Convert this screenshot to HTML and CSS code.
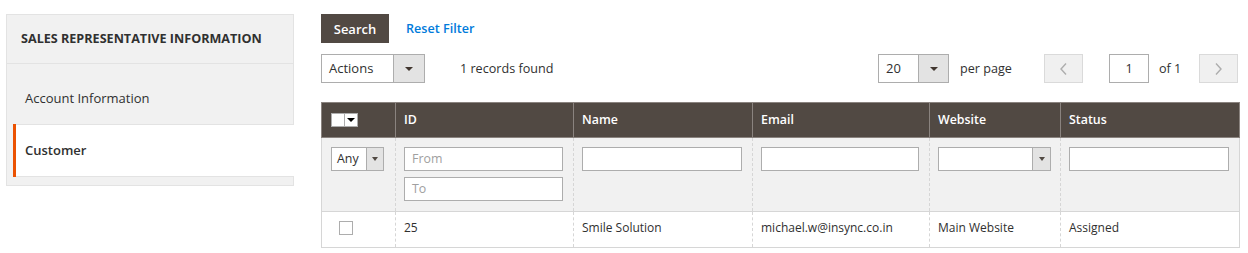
FILE: index.html
```html
<!DOCTYPE html>
<html lang="en">
<head>
<meta charset="utf-8">
<title>Sales Representative</title>
<link rel="stylesheet" href="styles.css">
</head>
<body>
<div class="page">
  <div class="nav">
    <div class="nav-title">Sales Representative Information</div>
    <ul class="nav-items">
      <li class="nav-item"><a class="nav-link" href="#">Account Information</a></li>
      <li class="nav-item active"><a class="nav-link" href="#">Customer</a></li>
    </ul>
  </div>
  <div class="main">
    <div class="toolbar-top">
      <button class="btn-search" type="button">Search</button>
      <a class="reset" href="#">Reset Filter</a>
    </div>
    <div class="toolbar">
      <div class="select sel-actions"><span class="sel-text">Actions</span><span class="sel-arrow"><i class="tri"></i></span></div>
      <span class="records">1 records found</span>
      <div class="pager">
        <div class="select sel-limit"><span class="sel-text">20</span><span class="sel-arrow"><i class="tri"></i></span></div>
        <span class="per-page">per page</span>
        <button class="pg-btn prev" type="button"><svg width="7" height="12" viewBox="0 0 7 12"><polyline points="6,0.5 1,6 6,11.5" fill="none" stroke="#adadad" stroke-width="1.4"/></svg></button>
        <div class="pg-input">1</div>
        <span class="of">of 1</span>
        <button class="pg-btn next" type="button"><svg width="7" height="12" viewBox="0 0 7 12"><polyline points="1,0.5 6,6 1,11.5" fill="none" stroke="#adadad" stroke-width="1.4"/></svg></button>
      </div>
    </div>
    <table class="grid">
      <colgroup>
        <col style="width:74px"><col style="width:178px"><col style="width:179px"><col style="width:177px"><col style="width:131px"><col style="width:179px">
      </colgroup>
      <thead>
        <tr class="head">
          <th class="th-mass"><div class="mass"><span class="mass-box"></span><span class="mass-arrow"><i class="tri tri-dark"></i></span></div></th>
          <th>ID</th>
          <th>Name</th>
          <th>Email</th>
          <th>Website</th>
          <th>Status</th>
        </tr>
        <tr class="filters">
          <td class="td-first"><div class="select sel-small sel-any"><span class="sel-text">Any</span><span class="sel-arrow"><i class="tri"></i></span></div></td>
          <td><div class="input placeholder">From</div><div class="input placeholder gap">To</div></td>
          <td><div class="input"></div></td>
          <td><div class="input"></div></td>
          <td><div class="select sel-small sel-web"><span class="sel-text"></span><span class="sel-arrow"><i class="tri"></i></span></div></td>
          <td><div class="input"></div></td>
        </tr>
      </thead>
      <tbody>
        <tr class="row">
          <td class="td-check"><span class="checkbox"></span></td>
          <td>25</td>
          <td>Smile Solution</td>
          <td>michael.w@insync.co.in</td>
          <td>Main Website</td>
          <td>Assigned</td>
        </tr>
      </tbody>
    </table>
  </div>
</div>
</body>
</html>
```
FILE: styles.css
```css
* { box-sizing: border-box; }
body {
  margin: 0;
  font-family: "Open Sans", "DejaVu Sans", sans-serif;
  color: #303030;
  background: #fff;
}
.page {
  display: flex;
  align-items: flex-start;
  padding: 14px 0 0 6px;
}

/* left nav */
.nav {
  width: 288px;
  flex: none;
  background: #f1f1f1;
  border: 1px solid #e3e3e3;
}
.nav-title {
  padding: 16px 14px;
  font-size: 12.6px;
  line-height: 16px;
  font-weight: 700;
  text-transform: uppercase;
  border-bottom: 1px solid #e3e3e3;
}
.nav-items {
  list-style: none;
  margin: 0;
  padding: 8px 0 9px;
}
.nav-item {
  margin-left: 6px;
  border-left: 3px solid transparent;
}
.nav-item.active { border-left-color: #eb5202; }
.nav-link {
  display: block;
  padding: 16px 10px 16px 9px;
  font-size: 13px;
  line-height: 19px;
  border: 1px solid transparent;
  border-width: 1px 0;
  margin-bottom: -1px;
  color: #303030;
  text-decoration: none;
}
.active .nav-link {
  background: #fff;
  border-color: #e3e3e3;
  margin-right: -1px;
  font-weight: 600;
}

/* main */
.main {
  margin-left: 27px;
  width: 918px;
  flex: none;
}
.toolbar-top {
  display: flex;
  align-items: center;
  height: 29px;
}
.btn-search {
  background: #514943;
  color: #fff;
  border: none;
  height: 29px;
  width: 68px;
  padding: 0;
  font-family: "Open Sans", sans-serif;
  font-size: 13px;
  font-weight: 600;
}
.reset {
  margin-left: 17px;
  color: #007bdb;
  font-size: 12.6px;
  font-weight: 600;
  text-decoration: none;
}
.toolbar {
  display: flex;
  align-items: center;
  margin-top: 11px;
  height: 29px;
  font-size: 12.6px;
}
.select {
  display: flex;
  height: 29px;
  border: 1px solid #adadad;
  background: #fff;
}
.sel-text {
  flex: 1;
  display: flex;
  align-items: center;
  padding-left: 7px;
  font-size: 13px;
  padding-bottom: 1px;
}
.sel-arrow {
  flex: none;
  display: flex;
  align-items: center;
  justify-content: center;
  background: #e3e3e3;
  border-left: 1px solid #adadad;
}
.tri {
  display: block;
  width: 0;
  height: 0;
  border-left: 4px solid transparent;
  border-right: 4px solid transparent;
  border-top: 4px solid #41362f;
}
.sel-actions { width: 104px; }
.sel-actions .sel-arrow { width: 31px; }
.records { margin-left: 35px; padding-bottom: 1px; }
.pager {
  margin-left: auto;
  display: flex;
  align-items: center;
  margin-right: 1px;
}
.sel-limit { width: 71px; }
.sel-limit .sel-arrow { width: 30px; }
.per-page { margin-left: 11px; width: 84px; padding-bottom: 1px; }
.pg-btn {
  width: 39px;
  height: 29px;
  background: #f0f0f0;
  border: 1px solid #dadada;
  display: flex;
  align-items: center;
  justify-content: center;
  padding: 0;
}
.pg-input {
  margin-left: 26px;
  width: 40px;
  height: 29px;
  border: 1px solid #adadad;
  display: flex;
  align-items: center;
  justify-content: center;
  padding-bottom: 1px;
}
.of { margin-left: 10px; width: 40px; padding-bottom: 1px; }

/* grid */
.grid {
  margin-top: 19px;
  width: 918px;
  border-collapse: collapse;
  table-layout: fixed;
  font-size: 12px;
}
.head th {
  background: #514943;
  color: #fff;
  font-weight: 600;
  font-size: 12.4px;
  text-align: left;
  height: 35px;
  padding: 0 9px 1px 8px;
  border: 1px solid #8a837f;
  border-left-color: #e8e6e5;
}
.head th:first-child { border-left-color: #8a837f; }
.th-mass { padding-left: 9px !important; }
.mass {
  display: flex;
  width: 27px;
  height: 14px;
  border: 1px solid #adadad;
  background: #fff;
}
.mass-box { width: 12px; background: #fff; }
.mass-arrow {
  flex: 1;
  display: flex;
  align-items: center;
  justify-content: center;
  background: #fff;
  border-left: 1px solid #adadad;
}
.tri-dark { border-top-color: #000; }
.filters td {
  background: #f1f1f1;
  vertical-align: top;
  padding: 9px 10px 10px 8px;
  height: 74px;
  border-left: 1px dashed #d6d6d6;
  border-bottom: 1px solid #d6d6d6;
}
.filters td:first-child { border-left: 1px solid #d6d6d6; padding-left: 9px; }
.filters td:last-child { border-right: 1px solid #d6d6d6; }
.input {
  width: 100%;
  height: 24px;
  border: 1px solid #adadad;
  background: #fff;
  padding: 0 7px;
  font-size: 12.4px;
  line-height: 22px;
}
.placeholder { color: #a0a0a0; }
.gap { margin-top: 6px; }
.sel-small { height: 24px; }
.sel-small .sel-text { padding-left: 5px; font-size: 12.4px; }
.sel-any { width: 53px; }
.sel-any .sel-arrow { width: 17px; }
.sel-web { width: 113px; }
.sel-web .sel-arrow { width: 18px; }
.sel-small .tri { border-left-width: 3.5px; border-right-width: 3.5px; border-top-width: 4px; border-top-color: #514943; }
.row td {
  height: 36px;
  padding: 0 9px 5px 8px;
  border-left: 1px dashed #d6d6d6;
  border-bottom: 1px solid #d6d6d6;
}
.row td:first-child { border-left: 1px solid #d6d6d6; }
.row td:last-child { border-right: 1px solid #d6d6d6; }
.td-check { padding-left: 17px !important; padding-bottom: 3px !important; }
.checkbox {
  display: block;
  width: 14px;
  height: 14px;
  border: 1px solid #adadad;
  background: #fff;
}
```
